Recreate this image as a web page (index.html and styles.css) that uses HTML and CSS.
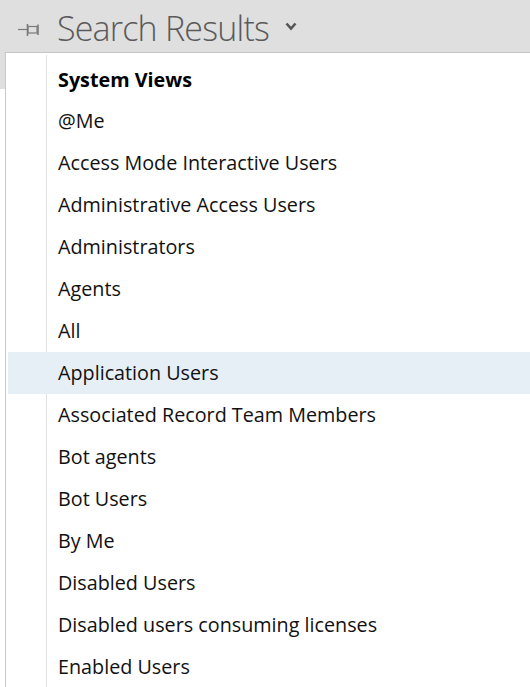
FILE: index.html
```html
<!DOCTYPE html>
<html>
<head>
<meta charset="utf-8">
<link rel="stylesheet" href="styles.css">
</head>
<body>
<div class="page">
  <div class="band">
    <div class="titlebar">
      <svg class="pin" width="24" height="14" viewBox="0 0 24 14">
        <path d="M0 6.5H9" stroke="#7a7a7a" stroke-width="1.2" fill="none"/>
        <path d="M9.5 1V13" stroke="#7a7a7a" stroke-width="1.6" fill="none"/>
        <rect x="10" y="3.5" width="9" height="6.5" stroke="#7a7a7a" stroke-width="1.2" fill="none"/>
        <path d="M20 1.5V12" stroke="#7a7a7a" stroke-width="1.6" fill="none"/>
      </svg>
      <h1 class="title">Search Results</h1>
      <svg class="chev" width="12" height="9" viewBox="0 0 12 9">
        <path d="M1.5 1.5L6 6.5L10.5 1.5" stroke="#555" stroke-width="2.6" fill="none"/>
      </svg>
    </div>
  </div>
  <div class="menu">
    <div class="row head"><span class="gutter"></span><span class="label">System Views</span></div>
    <div class="row"><span class="gutter"></span><span class="label">@Me</span></div>
    <div class="row"><span class="gutter"></span><span class="label">Access Mode Interactive Users</span></div>
    <div class="row"><span class="gutter"></span><span class="label">Administrative Access Users</span></div>
    <div class="row"><span class="gutter"></span><span class="label">Administrators</span></div>
    <div class="row"><span class="gutter"></span><span class="label">Agents</span></div>
    <div class="row"><span class="gutter"></span><span class="label">All</span></div>
    <div class="row hover"><span class="gutter"></span><span class="label">Application Users</span></div>
    <div class="row"><span class="gutter"></span><span class="label">Associated Record Team Members</span></div>
    <div class="row"><span class="gutter"></span><span class="label">Bot agents</span></div>
    <div class="row"><span class="gutter"></span><span class="label">Bot Users</span></div>
    <div class="row"><span class="gutter"></span><span class="label">By Me</span></div>
    <div class="row"><span class="gutter"></span><span class="label">Disabled Users</span></div>
    <div class="row"><span class="gutter"></span><span class="label">Disabled users consuming licenses</span></div>
    <div class="row"><span class="gutter"></span><span class="label">Enabled Users</span></div>
  </div>
</div>
</body>
</html>
```
FILE: styles.css
```css
html, body {
  margin: 0;
  padding: 0;
  background: #ffffff;
  overflow: hidden;
}
body {
  width: 530px;
  height: 687px;
  font-family: "Open Sans", "Noto Sans", sans-serif;
}
.page {
  position: relative;
  width: 530px;
  height: 687px;
  overflow: hidden;
}
.band {
  height: 89px;
  background: #dfdfdf;
}
.titlebar {
  height: 52px;
  display: flex;
  align-items: center;
  padding-left: 18px;
}
.pin {
  flex: none;
  margin-top: 8px;
}
.title {
  margin: 4px 0 0 15px;
  font-weight: 300;
  font-size: 34px;
  line-height: 48px;
  color: #5a5a5a;
  white-space: nowrap;
  letter-spacing: -0.8px;
}
.chev {
  flex: none;
  margin-left: 16px;
  margin-top: 1px;
}
.menu {
  position: absolute;
  top: 52px;
  left: 5px;
  right: 0;
  height: 640px;
  background: #ffffff;
  border-top: 1px solid #c6c6c6;
  border-left: 1px solid #c8c8c8;
  padding: 2px 0 0 2px;
}
.row {
  display: flex;
  height: 42px;
  font-size: 19.75px;
  color: #111111;
}
.row.head {
  height: 45px;
  font-weight: 700;
  color: #000000;
}
.row.head .label {
  padding-top: 5px;
  line-height: 40px;
}
.gutter {
  flex: none;
  width: 38px;
  border-right: 1px solid #e1e1e1;
}
.label {
  padding-left: 11px;
  line-height: 42px;
  white-space: nowrap;
}
.row.hover {
  background: #e6eef6;
}
.row.hover .gutter {
  border-right-color: transparent;
}
```
